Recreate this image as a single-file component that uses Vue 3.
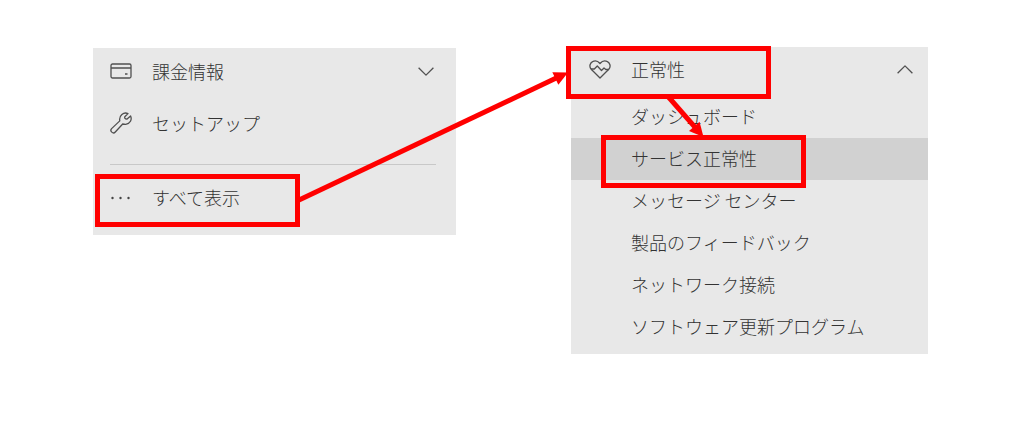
<script setup>
import { onBeforeUnmount, onMounted, reactive, ref } from 'vue'

const healthItems = [
  { label: 'ダッシュボード' },
  { label: 'サービス正常性', selected: true },
  { label: 'メッセージ センター' },
  { label: '製品のフィードバック' },
  { label: 'ネットワーク接続' },
  { label: 'ソフトウェア更新プログラム' },
]

const canvas = ref(null)
const arrows = reactive([])

// Line with a triangular head whose tip touches the target point
function makeArrow(x1, y1, x2, y2) {
  const length = Math.hypot(x2 - x1, y2 - y1) || 1
  const ux = (x2 - x1) / length
  const uy = (y2 - y1) / length
  const bx = x2 - ux * 14
  const by = y2 - uy * 14
  return {
    line: { x1, y1, x2: bx + ux, y2: by + uy },
    head: `${x2},${y2} ${bx - uy * 7},${by + ux * 7} ${bx + uy * 7},${by - ux * 7}`,
  }
}

function updateArrows() {
  const origin = canvas.value.getBoundingClientRect()
  const [all, health, service] = ['all', 'health', 'service'].map((name) => {
    const r = canvas.value.querySelector(`.mark-${name}`).getBoundingClientRect()
    return {
      left: r.left - origin.left,
      right: r.right - origin.left,
      top: r.top - origin.top,
      bottom: r.bottom - origin.top,
      cx: (r.left + r.right) / 2 - origin.left,
      cy: (r.top + r.bottom) / 2 - origin.top,
    }
  })
  arrows.splice(
    0,
    arrows.length,
    makeArrow(all.right - 2, all.cy, health.left + 2, health.cy),
    makeArrow(health.cx, health.bottom - 2, service.cx, service.top + 2),
  )
}

onMounted(() => {
  updateArrows()
  window.addEventListener('resize', updateArrows)
})
onBeforeUnmount(() => window.removeEventListener('resize', updateArrows))
</script>

<template>
  <main ref="canvas" class="canvas">
    <nav class="panel panel-main" aria-label="メイン">
      <button class="row" type="button">
        <svg class="icon" viewBox="0 0 22 22" aria-hidden="true">
          <rect x="1" y="4" width="20" height="14" rx="1.5" />
          <path d="M1 8h20M15 14h2.500" />
        </svg>
        <span>課金情報</span>
        <svg class="chevron" viewBox="0 0 16 9" aria-hidden="true"><path d="M.6.8 8 8.100 15.400.8" /></svg>
      </button>
      <button class="row" type="button">
        <svg class="icon" viewBox="0 0 22 22" aria-hidden="true">
          <path d="M18 1.600 14.800 4.800Q14.200 6.800 16.800 7.200L20.600 3.900C22.200 7.500 20.300 11.800 15.700 12.300Q13.800 12.300 12.700 12L5.300 20C3.100 22.400-.6 19.100 1.600 16.600L9.800 8.900C8.700 3.600 13.700-.4 18 1.600Z" />
        </svg>
        <span>セットアップ</span>
      </button>
      <hr class="divider" />
      <button class="row" type="button">
        <svg class="icon dots" viewBox="0 0 22 22" aria-hidden="true">
          <circle cx="2.500" cy="12" r="1.200" /><circle cx="10.500" cy="12" r="1.200" /><circle cx="18.500" cy="12" r="1.200" />
        </svg>
        <span>すべて表示</span>
        <i class="mark mark-all" aria-hidden="true"></i>
      </button>
    </nav>

    <nav class="panel panel-health" aria-label="正常性">
      <button class="row" type="button" aria-expanded="true">
        <svg class="icon" viewBox="0 0 22 22" aria-hidden="true">
          <path d="M11 20 2.200 11.200C-.2 8.700 1 4.500 4 3.300 6.500 2.200 9 3.100 11 5.500 13 3.100 15.500 2.200 18 3.300 21 4.500 22.200 8.700 19.800 11.200Z" />
          <path d="M2 11H5.300L8.300 8 12.500 12.500 15 10 16.800 11.500H19.500" />
        </svg>
        <span>正常性</span>
        <svg class="chevron" viewBox="0 0 16 9" aria-hidden="true"><path d="M.6 8.200 8 .9 15.400 8.200" /></svg>
        <i class="mark mark-health" aria-hidden="true"></i>
      </button>
      <ul class="sublist">
        <li v-for="item in healthItems" :key="item.label">
          <a class="sublink" :class="{ selected: item.selected }" href="#" :aria-current="item.selected ? 'page' : undefined">
            {{ item.label }}
            <i v-if="item.selected" class="mark mark-service" aria-hidden="true"></i>
          </a>
        </li>
      </ul>
    </nav>

    <svg class="arrows" aria-hidden="true">
      <g v-for="(arrow, index) in arrows" :key="index">
        <line v-bind="arrow.line" />
        <polygon :points="arrow.head" />
      </g>
    </svg>
  </main>
</template>

<style>
body {
  margin: 0;
  background: #fff;
}
</style>

<style scoped>
.canvas {
  position: relative;
  box-sizing: border-box;
  min-height: 100vh;
  padding: 47px 96px 47px 93px;
  display: grid;
  grid-template-columns: 363fr 357fr;
  column-gap: 115px;
  align-items: start;
  color: #333;
  font-family: "Noto Sans CJK JP", sans-serif;
  font-size: 18px;
  font-weight: 300;
  line-height: 26px;
}

.panel {
  background: #e8e8e8;
}

.panel-main {
  display: flex;
  flex-direction: column;
  gap: 4px;
  margin-top: 1px;
  padding-bottom: 13px;
}

.panel-health {
  padding-bottom: 6px;
}

.row {
  position: relative;
  display: flex;
  align-items: center;
  box-sizing: border-box;
  width: 100%;
  height: 48px;
  margin: 0;
  padding: 0 22px 2px 17px;
  border: 0;
  background: none;
  color: inherit;
  font: inherit;
  text-align: left;
  cursor: pointer;
}

.panel-health .row {
  height: 46px;
  padding: 0 15px 2px 18px;
}

.icon {
  flex: none;
  width: 22px;
  height: 22px;
  margin-right: 20px;
}

.icon,
.chevron {
  fill: none;
  stroke: #505050;
  stroke-width: 1.3;
  stroke-linejoin: round;
}

.dots {
  fill: #444;
  stroke: none;
}

.chevron {
  width: 16px;
  height: 9px;
  margin-left: auto;
}

.divider {
  margin: 12px 20px 5px 17px;
  border: 0;
  border-top: 1px solid #c8c8c8;
}

.sublist {
  margin: 3px 0 0;
  padding: 0;
  list-style: none;
}

.sublink {
  position: relative;
  display: block;
  padding: 7px 0 9px 60px;
  color: inherit;
  text-decoration: none;
}

.selected {
  background: #d1d1d1;
}

.mark {
  position: absolute;
  box-sizing: border-box;
  width: 205px;
  height: 53px;
  border: 5px solid #f00;
  pointer-events: none;
}

.mark-all {
  top: 0;
  left: 2px;
}

.mark-health {
  top: -1px;
  left: -5px;
}

.mark-service {
  top: -3px;
  left: 30px;
}

.arrows {
  position: absolute;
  inset: 0;
  width: 100%;
  height: 100%;
  fill: #f00;
  pointer-events: none;
}

.arrows line {
  stroke: #f00;
  stroke-width: 5;
}
</style>
